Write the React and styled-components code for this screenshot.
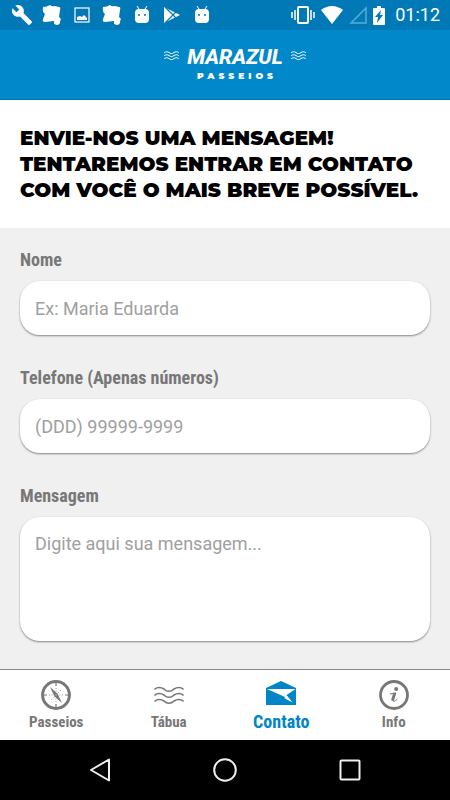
import React from "react";
import styled, { createGlobalStyle } from "styled-components";

const GlobalStyle = createGlobalStyle`
   * {
      box-sizing: border-box;
   }

   body {
      margin: 0;
      background: #f0f0f0;
      font-family: Roboto, "Liberation Sans", sans-serif;
   }

   button {
      border: 0;
      padding: 0;
      background: none;
      cursor: pointer;
   }
`;

const Screen = styled.div`
   display: flex;
   flex-direction: column;
   min-height: 100vh;
`;

const StatusBar = styled.div`
   display: flex;
   align-items: center;
   justify-content: space-between;
   height: 30px;
   padding: 0 10px 0 7px;
   background: #0079b6;
   color: #fff;
`;

const Notifications = styled.div`
   display: grid;
   grid-template-columns: repeat(7, 30px);
   align-items: center;
   justify-items: center;

   svg {
      display: block;
   }
`;

const DeviceStatus = styled.div`
   display: flex;
   align-items: center;
   gap: 6px;

   svg {
      display: block;
   }
`;

const Clock = styled.time`
   margin-left: 4px;
   font-size: 18px;
   line-height: 30px;
`;

const Header = styled.header`
   display: flex;
   align-items: center;
   justify-content: center;
   gap: 8px;
   height: 70px;
   padding: 0 0 2px 20px;
   border-bottom: 1px solid #0073ad;
   background: #0088ca;
   color: #fff;

   > svg {
      margin-bottom: 16px;
   }
`;

const Brand = styled.div`
   display: flex;
   flex-direction: column;
   align-items: center;
`;

const BrandName = styled.span`
   font-size: 21px;
   line-height: 24px;
   font-weight: 800;
   font-style: italic;
`;

const BrandSub = styled.span`
   padding-left: 4px;
   font-family: Montserrat, Inter, sans-serif;
   font-size: 9px;
   line-height: 14px;
   font-weight: 900;
   letter-spacing: 4px;
`;

const Intro = styled.section`
   padding: 25px 20px;
   background: #fff;
`;

const Title = styled.h1`
   margin: 0;
   color: #000;
   font-family: Montserrat, Inter, sans-serif;
   font-size: 20px;
   line-height: 26px;
   font-weight: 900;
   text-transform: uppercase;
   white-space: nowrap;
`;

const Form = styled.form`
   display: flex;
   flex: 1;
   flex-direction: column;
   gap: 31px;
   padding: 20px 20px 28px;
   background: #f0f0f0;
`;

const Field = styled.div`
   display: flex;
   flex-direction: column;
   gap: 9px;

   label {
      color: #777;
      font-family: "Roboto Condensed", "Liberation Sans Narrow", Roboto, sans-serif;
      font-size: 18px;
      line-height: 24px;
      font-weight: 700;
   }

   input,
   textarea {
      display: block;
      width: 100%;
      margin: 0;
      border: 0;
      border-radius: 20px;
      outline: 0;
      background: #fff;
      box-shadow: 0 1px 2px rgba(0, 0, 0, 0.45);
      color: #444;
      font-family: inherit;
      font-size: 18px;
      line-height: 24px;
      resize: none;

      &::placeholder {
         color: #a0a0a0;
         opacity: 1;
      }
   }

   input {
      height: 54px;
      padding: 0 15px;
   }

   textarea {
      height: 124px;
      padding: 15px;
   }
`;

const TabBar = styled.nav`
   display: grid;
   grid-template-columns: repeat(4, 1fr);
   height: 71px;
   border-top: 1px solid #888;
   background: #fff;
`;

const Tab = styled.a`
   display: flex;
   flex-direction: column;
   align-items: center;
   padding-top: 10px;
   color: ${props => (props.$active ? "#0085c7" : "#777")};
   font-family: "Roboto Condensed", "Liberation Sans Narrow", Roboto, sans-serif;
   font-size: ${props => (props.$active ? 18 : 15)}px;
   line-height: 24px;
   font-weight: 700;
   text-decoration: none;

   svg {
      display: block;
   }
`;

const SystemBar = styled.div`
   display: flex;
   align-items: center;
   justify-content: center;
   gap: 95px;
   height: 60px;
   background: #000;

   svg {
      display: block;
   }
`;

const Wave = ({ width, stroke }) => (
   <svg width={width} height={width} viewBox="0 0 30 30" fill="none" stroke="currentColor" strokeWidth={stroke} strokeLinecap="round">
      {[9, 15, 21].map(y => (
         <path key={y} d={`M1 ${y}C3 ${y - 2} 7 ${y - 2} 10 ${y}C13 ${y + 3} 17 ${y + 3} 20 ${y}C23 ${y - 2} 27 ${y - 2} 29 ${y}`} />
      ))}
   </svg>
);

const Wrench = () => (
   <svg width="22" height="22" viewBox="0 0 24 24" fill="currentColor">
      <path d="M22.7 19l-9.1-9.1c.9-2.3.4-5-1.5-6.9-2-2-5-2.4-7.4-1.3L9 6 6 9 1.6 4.7C.4 7.1.9 10.1 2.9 12.1c1.9 1.9 4.6 2.4 6.9 1.5l9.1 9.1c.4.4 1 .4 1.4 0l2.3-2.3c.5-.4.5-1.1.1-1.4z" />
   </svg>
);

const Note = () => (
   <svg width="20" height="20" viewBox="0 0 20 20" fill="currentColor">
      <path d="M1 2Q5 2 8 0Q10 2 13 1L17 2Q19 2 18 5L17 12Q20 14 18 16Q19 19 15 20L12 19V16L3 17Q0 17 1 14L3 9Q0 7 1 2Z" />
   </svg>
);

const Picture = () => (
   <svg width="16" height="16" viewBox="0 0 16 16">
      <rect x="1" y="1" width="14" height="14" fill="none" stroke="currentColor" strokeWidth="1.2" />
      <path d="M3 13V10L6 9L8 10L10 8L13 11V13Z" fill="currentColor" />
   </svg>
);

const Android = () => (
   <svg width="16" height="20" viewBox="0 0 16 20" fill="currentColor">
      <path d="M3 1L5 4M13 1L11 4" stroke="currentColor" />
      <path d="M1 8Q1 4 5 4H11Q15 4 15 8V14Q15 18 11 18H5Q1 18 1 14Z" />
      <circle cx="5" cy="10" r="1" fill="#0079b6" />
      <circle cx="11" cy="10" r="1" fill="#0079b6" />
   </svg>
);

const Play = () => (
   <svg width="18" height="18" viewBox="0 0 18 18" fill="currentColor">
      <path d="M1 1L17 9L1 17Z" />
      <path d="M2 1L14 13M2 17L14 5" stroke="#0079b6" strokeWidth="1.2" />
   </svg>
);

const Vibrate = () => (
   <svg width="24" height="18" viewBox="0 0 24 18" fill="none" stroke="currentColor" strokeWidth="2">
      <rect x="7" y="1" width="10" height="16" rx="1" />
      <path d="M4 4V14M20 4V14" strokeWidth="1.5" />
      <path d="M1 6V12M23 6V12" strokeWidth="1.5" />
   </svg>
);

const Wifi = () => (
   <svg width="22" height="18" viewBox="0 0 22 18" fill="currentColor">
      <path d="M0 4Q11 -4 22 4L11 18Z" />
   </svg>
);

const Signal = () => (
   <svg width="18" height="18" viewBox="0 0 18 18" fill="none" stroke="#55aed8" strokeWidth="1.5">
      <path d="M2 17L17 2V17Z" />
   </svg>
);

const Battery = () => (
   <svg width="12" height="19" viewBox="0 0 12 19">
      <path d="M4 0H8V2H11Q12 2 12 3V18Q12 19 11 19H1Q0 19 0 18V3Q0 2 1 2H4Z" fill="currentColor" />
      <path d="M8 4L2 11H5L4 17L10 9H7Z" fill="#0079b6" />
   </svg>
);

const Compass = () => (
   <svg width="30" height="30" viewBox="0 0 30 30" fill="none" stroke="currentColor">
      <circle cx="15" cy="15" r="13.4" strokeWidth="3" />
      <path d="M15 3V6M15 24V27M3 15H6M24 15H27" strokeWidth="1.2" />
      <path d="M10 20L20 10M15 8V22M8 15H22M11 9L19 21" strokeWidth="0.7" strokeDasharray="1 1.6" />
      <path d="M9 7L16.6 13.8L21 23L13.4 16.2Z" fill="currentColor" stroke="none" />
      <circle cx="15" cy="15" r="0.8" fill="#bbb" stroke="none" />
   </svg>
);

const Envelope = () => (
   <svg width="30" height="30" viewBox="0 0 30 30" fill="currentColor">
      <path d="M0 8L15 1L30 8V25H0Z" />
      <path d="M1 9H29.5L20.5 15L26.5 22.5L18.5 18.2L19 17Z" fill="#fff" />
   </svg>
);

const Info = () => (
   <svg width="30" height="30" viewBox="0 0 30 30" fill="none" stroke="currentColor">
      <circle cx="15" cy="15" r="13.5" strokeWidth="2.8" />
      <circle cx="17.2" cy="9" r="2" fill="currentColor" stroke="none" />
      <path d="M11 14L16.8 12.8L14.2 20.4Q13.8 22.8 18.4 19.2" strokeWidth="1" />
      <path d="M15.6 13.2L13.4 20.6" strokeWidth="2.8" />
   </svg>
);

const tabs = [
   { label: "Passeios", slug: "passeios", icon: <Compass /> },
   { label: "Tábua", slug: "tabua", icon: <Wave width={30} stroke={1.7} /> },
   { label: "Contato", slug: "contato", icon: <Envelope /> },
   { label: "Info", slug: "info", icon: <Info /> }
];

const App = () => (
   <Screen>
      <GlobalStyle />

      <StatusBar>
         <Notifications>
            <Wrench />
            <Note />
            <Picture />
            <Note />
            <Android />
            <Play />
            <Android />
         </Notifications>
         <DeviceStatus>
            <Vibrate />
            <Wifi />
            <Signal />
            <Battery />
            <Clock>01:12</Clock>
         </DeviceStatus>
      </StatusBar>

      <Header>
         <Wave width={15} stroke={2} />
         <Brand>
            <BrandName>MARAZUL</BrandName>
            <BrandSub>PASSEIOS</BrandSub>
         </Brand>
         <Wave width={15} stroke={2} />
      </Header>

      <Intro>
         <Title>
            Envie-nos uma mensagem!
            <br />
            Tentaremos entrar em contato
            <br />
            com você o mais breve possível.
         </Title>
      </Intro>

      <Form>
         <Field>
            <label htmlFor="nome">Nome</label>
            <input id="nome" type="text" placeholder="Ex: Maria Eduarda" />
         </Field>
         <Field>
            <label htmlFor="telefone">Telefone (Apenas números)</label>
            <input id="telefone" type="tel" placeholder="(DDD) 99999-9999" />
         </Field>
         <Field>
            <label htmlFor="mensagem">Mensagem</label>
            <textarea id="mensagem" placeholder="Digite aqui sua mensagem..." />
         </Field>
      </Form>

      <TabBar>
         {tabs.map(tab => (
            <Tab key={tab.slug} href={`#${tab.slug}`} $active={tab.slug === "contato"}>
               {tab.icon}
               {tab.label}
            </Tab>
         ))}
      </TabBar>

      <SystemBar>
         <button type="button" aria-label="Voltar">
            <svg width="30" height="30" viewBox="0 0 30 30" fill="none" stroke="#eee" strokeWidth="2" strokeLinejoin="round">
               <path d="M6 15L24 4.5V25.5Z" />
            </svg>
         </button>
         <button type="button" aria-label="Início">
            <svg width="30" height="30" viewBox="0 0 30 30" fill="none" stroke="#eee" strokeWidth="2">
               <circle cx="15" cy="15" r="10.8" />
            </svg>
         </button>
         <button type="button" aria-label="Recentes">
            <svg width="30" height="30" viewBox="0 0 30 30" fill="none" stroke="#eee" strokeWidth="2">
               <rect x="5.5" y="5.5" width="19" height="19" rx="1" />
            </svg>
         </button>
      </SystemBar>
   </Screen>
);

export default App;
